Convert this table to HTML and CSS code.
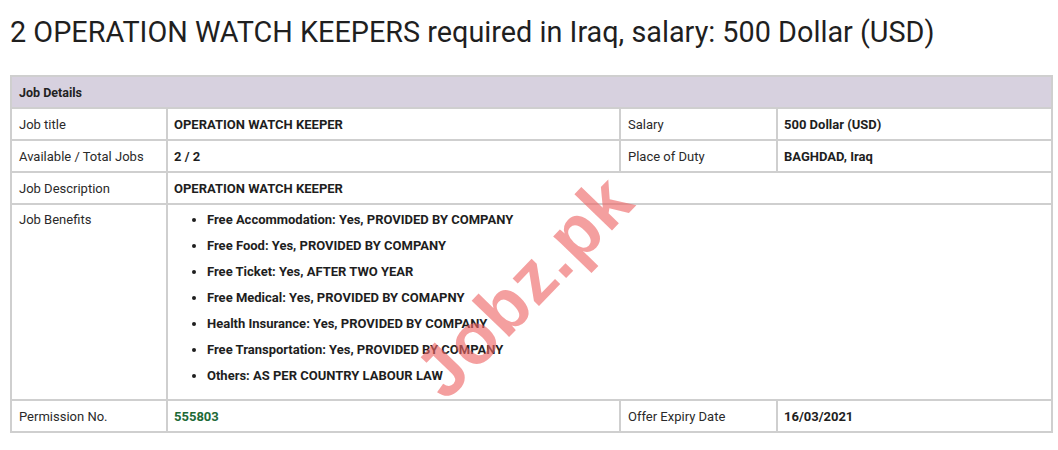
FILE: index.html
```html
<!DOCTYPE html>
<html>
<head>
<meta charset="utf-8">
<link rel="stylesheet" href="styles.css">
</head>
<body>
<div class="page">
  <h1 class="title">2 OPERATION WATCH KEEPERS required in Iraq, salary: 500 Dollar (USD)</h1>
  <div class="wrap">
    <table class="details">
      <colgroup>
        <col class="c1"><col class="c2"><col class="c3"><col class="c4">
      </colgroup>
      <tr class="head"><th colspan="4">Job Details</th></tr>
      <tr>
        <td class="lbl">Job title</td><td class="val">OPERATION WATCH KEEPER</td>
        <td class="lbl">Salary</td><td class="val">500 Dollar (USD)</td>
      </tr>
      <tr>
        <td class="lbl">Available / Total Jobs</td><td class="val">2 / 2</td>
        <td class="lbl">Place of Duty</td><td class="val">BAGHDAD, Iraq</td>
      </tr>
      <tr>
        <td class="lbl">Job Description</td><td class="val" colspan="3">OPERATION WATCH KEEPER</td>
      </tr>
      <tr>
        <td class="lbl top">Job Benefits</td>
        <td class="val list" colspan="3">
          <ul class="benefits">
            <li>Free Accommodation: Yes, PROVIDED BY COMPANY</li>
            <li>Free Food: Yes, PROVIDED BY COMPANY</li>
            <li>Free Ticket: Yes, AFTER TWO YEAR</li>
            <li>Free Medical: Yes, PROVIDED BY COMAPNY</li>
            <li>Health Insurance: Yes, PROVIDED BY COMPANY</li>
            <li>Free Transportation: Yes, PROVIDED BY COMPANY</li>
            <li>Others: AS PER COUNTRY LABOUR LAW</li>
          </ul>
        </td>
      </tr>
      <tr>
        <td class="lbl">Permission No.</td><td class="val green">555803</td>
        <td class="lbl">Offer Expiry Date</td><td class="val">16/03/2021</td>
      </tr>
    </table>
    <div class="watermark">Jobz.pk</div>
  </div>
</div>
</body>
</html>
```
FILE: styles.css
```css
html, body { margin: 0; padding: 0; background: #fff; }
body { font-family: Roboto, "Liberation Sans", Arial, sans-serif; color: #222; }
.page { padding: 0 5px 0 10px; }
.title {
  margin: 0;
  padding-top: 13px;
  font-size: 28.8px;
  font-weight: 400;
  line-height: 38px;
  color: #1f1f1f;
}
.wrap { position: relative; margin-top: 24px; width: 1043px; }
.details {
  width: 1043px;
  table-layout: fixed;
  border-collapse: collapse;
  border: 2px solid #cfcfcf;
  font-size: 13px;
}
.c1 { width: 156px; }
.c2 { width: 453px; }
.c3 { width: 157px; }
.c4 { width: auto; }
.details th, .details td {
  border: 2px solid #cfcfcf;
  height: 30px;
  padding: 0 7px;
  text-align: left;
  vertical-align: middle;
}
.details td.val { padding-left: 6px; }
.head th {
  background: #d7d1df;
  font-weight: 700;
  font-size: 12.5px;
  color: #222;
}
.lbl { color: #2a2a2a; font-weight: 400; }
.val { font-weight: 700; font-size: 13px; color: #1e1e1e; }
.top { vertical-align: top !important; padding-top: 7px !important; }
.list { padding: 0 6px !important; }
.green { color: #1d6a37; }
.benefits {
  margin: 0;
  padding: 2px 0 10px 33px;
  list-style: disc;
}
.benefits li {
  line-height: 26px;
  font-size: 13px;
}
.watermark {
  position: absolute;
  left: 376px;
  top: 170px;
  transform: rotate(-46deg);
  transform-origin: center;
  font-family: "Liberation Sans", Arial, sans-serif;
  font-weight: 700;
  font-size: 72px;
  color: rgba(238, 100, 100, 0.62);
  pointer-events: none;
  letter-spacing: 1px;
}
```
